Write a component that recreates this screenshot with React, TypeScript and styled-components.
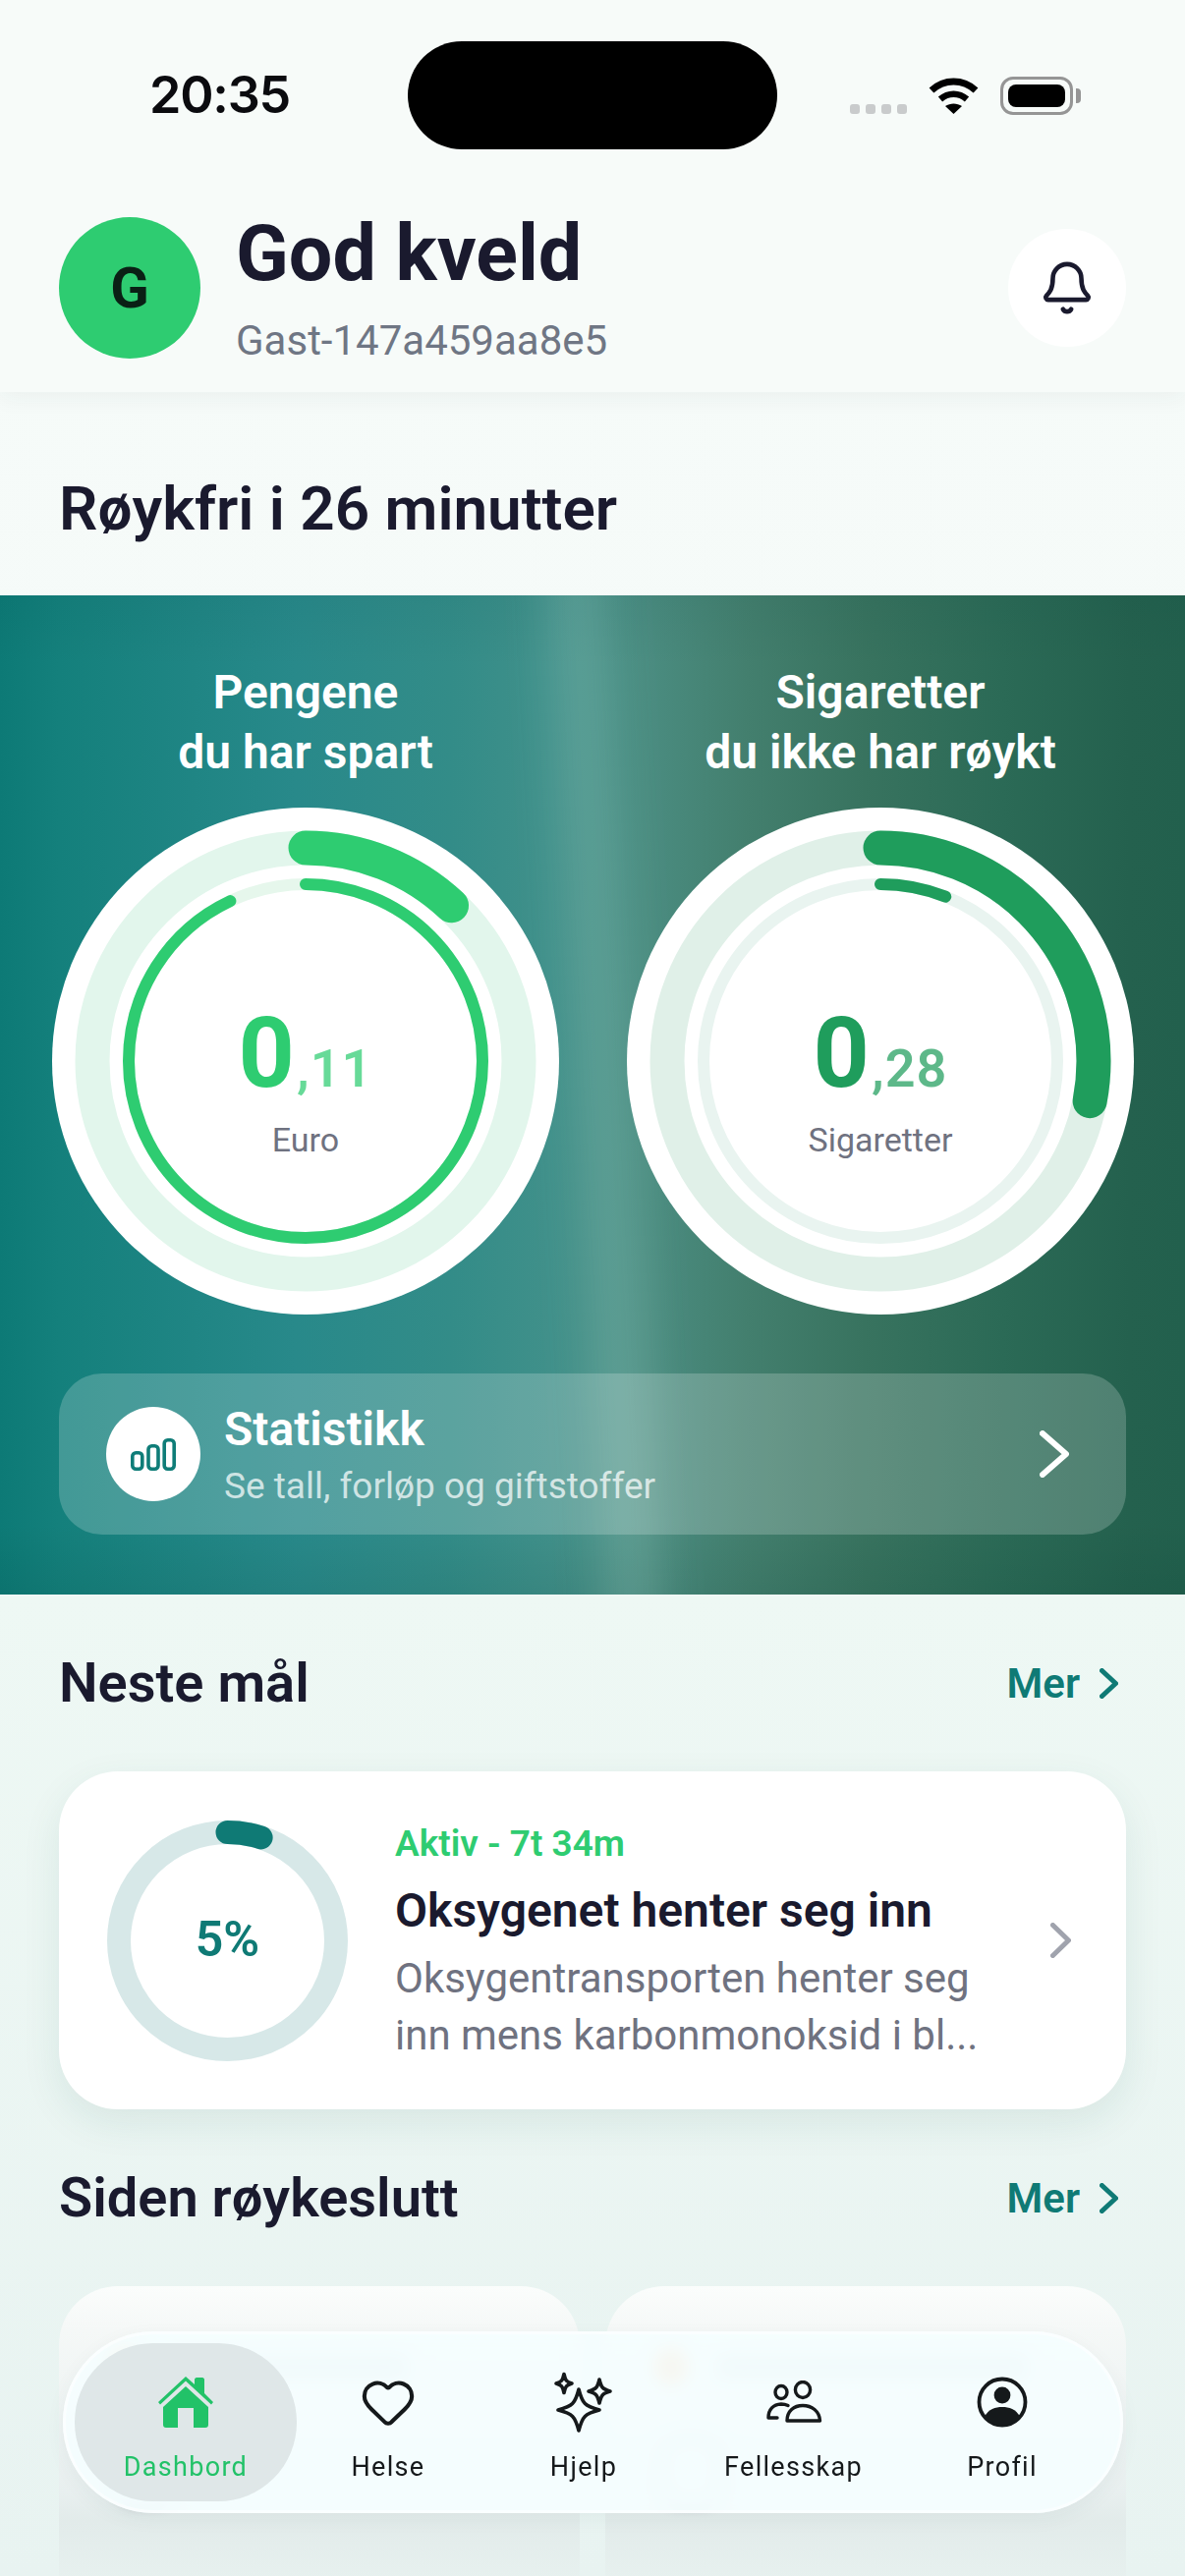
import React from "react";
import styled, { createGlobalStyle } from "styled-components";
import { Bell, Heart } from "lucide-react";

const GlobalStyle = createGlobalStyle`
    html, body {
        margin: 0;
        padding: 0;
        background: #f6fbf9;
    }
    * {
        box-sizing: border-box;
    }
`;

const Screen = styled.div`
    position: relative;
    width: 1206px;
    height: 2622px;
    overflow: hidden;
    font-family: Roboto, "Noto Sans", sans-serif;
    color: #1a1a2e;
    background: linear-gradient(180deg, #f6fbf9 0, #f5faf8 1623px, #eef8f4 1624px, #e8f3f1 2622px);
`;

const TopArea = styled.header`
    height: 399px;
    background: #f7fbf9;
    box-shadow: 0 6px 22px rgba(30, 60, 50, 0.05);
    position: relative;
`;

const StatusBar = styled.div`
    display: grid;
    grid-template-columns: 415px 376px 1fr;
    height: 178px;
    padding-top: 42px;
`;

const Clock = styled.div`
    padding-left: 152px;
    font-family: Inter, sans-serif;
    font-size: 52px;
    line-height: 110px;
    font-weight: 600;
    letter-spacing: -1.2px;
    color: #0b0b0f;
`;

const Island = styled.div`
    height: 110px;
    border-radius: 55px;
    background: #000;
`;

const StatusIcons = styled.div`
    display: flex;
    align-items: center;
    height: 110px;
    padding-left: 74px;
`;

const SignalDots = styled.div`
    display: flex;
    gap: 6px;
    margin: 28px 22px 0 0;
`;

const SignalDot = styled.span`
    width: 10px;
    height: 10px;
    border-radius: 3px;
    background: #c9cbcc;
`;

const Battery = styled.div`
    position: relative;
    width: 74px;
    height: 39px;
    margin-left: 22px;
    padding: 5px;
    border: 3px solid #959595;
    border-radius: 13px;

    &::before {
        content: "";
        display: block;
        height: 100%;
        background: #000;
        border-radius: 8px;
    }

    &::after {
        content: "";
        position: absolute;
        right: -11px;
        top: 9px;
        width: 5px;
        height: 15px;
        background: #959595;
        border-radius: 0 4px 4px 0;
    }
`;

const Greeting = styled.div`
    display: flex;
    align-items: center;
    padding: 36px 60px 0;
`;

const Avatar = styled.div`
    width: 144px;
    height: 144px;
    border-radius: 50%;
    background: #2ecc71;
    display: flex;
    align-items: center;
    justify-content: center;
    font-size: 58px;
    font-weight: 700;
    color: #0a2015;
`;

const GreetingText = styled.div`
    flex: 1;
    margin-left: 36px;
`;

const GreetingTitle = styled.h1`
    margin: 0;
    font-size: 79px;
    line-height: 88px;
    font-weight: 700;
    color: #1a1a2e;
`;

const GreetingName = styled.div`
    margin-top: 20px;
    font-size: 42px;
    line-height: 50px;
    color: #6f7684;
`;

const BellButton = styled.div`
    width: 120px;
    height: 120px;
    border-radius: 50%;
    background: #fff;
    display: flex;
    align-items: center;
    justify-content: center;
    color: #1a1a2e;
`;

const SmokeFree = styled.h2`
    margin: 0;
    height: 207px;
    padding: 85px 60px 0;
    font-size: 62px;
    line-height: 68px;
    font-weight: 600;
    color: #1a1a2e;
`;

const Hero = styled.section`
    position: relative;
    overflow: hidden;
    height: 1017px;
    padding: 68px 60px 0 53px;
    background:
        linear-gradient(180deg, rgba(0, 50, 50, 0.06), transparent 7%, transparent 93%, rgba(0, 50, 40, 0.1)),
        linear-gradient(
            90deg,
            #0d7a76 0,
            #14807c 60px,
            #28898a 300px,
            #338c88 460px,
            #40908a 560px,
            #4a8c80 660px,
            #437f6e 760px,
            #38735f 880px,
            #2b6a56 1020px,
            #24614e 1150px,
            #22604d 1206px
        );

    &::before {
        content: "";
        position: absolute;
        left: 590px;
        top: -60px;
        width: 50px;
        height: 1140px;
        background: rgba(175, 215, 205, 0.26);
        filter: blur(24px);
        transform: rotate(-3deg);
    }
`;

const RingRow = styled.div`
    position: relative;
    display: grid;
    grid-template-columns: 516px 516px;
    column-gap: 69px;
`;

const RingColumn = styled.div`
    display: flex;
    flex-direction: column;
    align-items: center;
`;

const RingTitle = styled.div`
    height: 148px;
    font-size: 48px;
    line-height: 61px;
    font-weight: 600;
    color: #fff;
    text-align: center;
    white-space: nowrap;
`;

const Disc = styled.div`
    display: grid;
    width: 516px;
    height: 516px;
    border-radius: 50%;
    background: #fff;
    place-items: center;

    & > * {
        grid-area: 1 / 1;
    }
`;

const RingValue = styled.div<{ $color: string }>`
    display: flex;
    flex-direction: column;
    align-items: center;
    color: ${(p) => p.$color};
    padding-top: 36px;
`;

const Amount = styled.div`
    display: flex;
    align-items: baseline;
    height: 110px;
    font-size: 100px;
    line-height: 110px;
    font-weight: 700;
`;

const Decimals = styled.span`
    margin-left: 2px;
    font-size: 54px;
    font-weight: 600;
    letter-spacing: 1px;
    opacity: 0.72;
`;

const Unit = styled.div`
    margin-top: 13px;
    font-size: 34px;
    line-height: 40px;
    color: #6f7280;
`;

const StatsCard = styled.div`
    position: relative;
    display: flex;
    align-items: center;
    width: 1086px;
    height: 164px;
    margin: 60px 0 0 7px;
    padding: 0 58px 0 48px;
    border-radius: 44px;
    background: rgba(255, 255, 255, 0.2);
`;

const StatsIcon = styled.div`
    width: 96px;
    height: 96px;
    border-radius: 50%;
    background: #fff;
    display: flex;
    align-items: center;
    justify-content: center;
`;

const StatsText = styled.div`
    flex: 1;
    margin-left: 24px;
`;

const StatsTitle = styled.div`
    font-size: 48px;
    line-height: 58px;
    font-weight: 600;
    color: #fff;
`;

const StatsSub = styled.div`
    margin-top: 7px;
    font-size: 37px;
    line-height: 44px;
    color: rgba(255, 255, 255, 0.72);
`;

const SectionHead = styled.div<{ $height: number }>`
    display: flex;
    justify-content: space-between;
    align-items: center;
    height: ${(p) => p.$height}px;
    padding: 0 68px 0 60px;
`;

const SectionTitle = styled.h3`
    margin: 0;
    font-size: 56px;
    line-height: 66px;
    font-weight: 600;
    color: #1a1a2e;
`;

const MoreLink = styled.div`
    display: flex;
    align-items: center;
    gap: 20px;
    font-size: 42px;
    font-weight: 600;
    color: #0f7a75;
`;

const GoalCard = styled.div`
    display: flex;
    align-items: center;
    height: 344px;
    margin: 0 60px;
    padding: 0 56px 0 49px;
    border-radius: 60px;
    background: #fff;
    box-shadow: 0 14px 40px rgba(20, 90, 80, 0.09);
`;

const GoalRing = styled.div`
    display: grid;
    flex: none;
    width: 245px;
    height: 245px;
    place-items: center;

    & > * {
        grid-area: 1 / 1;
    }
`;

const GoalPercent = styled.div`
    font-size: 50px;
    line-height: 60px;
    margin-bottom: 2px;
    font-weight: 600;
    color: #0f7a75;
`;

const GoalText = styled.div`
    flex: 1;
    margin-left: 48px;
`;

const GoalStatus = styled.div`
    margin-top: 5px;
    font-size: 37px;
    line-height: 46px;
    font-weight: 600;
    color: #2ecc71;
`;

const GoalTitle = styled.div`
    margin-top: 15px;
    font-size: 48px;
    line-height: 60px;
    font-weight: 600;
    color: #1a1a2e;
`;

const GoalDesc = styled.div`
    margin-top: 10px;
    font-size: 42px;
    line-height: 58px;
    color: #6f7280;
`;

const TileRow = styled.div`
    display: grid;
    grid-template-columns: 530px 530px;
    column-gap: 26px;
    padding: 0 60px;
`;

const Tile = styled.div`
    height: 300px;
    padding: 63px 50px 0;
    border-radius: 60px 60px 0 0;
    background: linear-gradient(180deg, #fbfdfc 0, #f5f8f7 15%, #e8efef 70%, #e2ebea 80%, #e7f1ef 100%);
`;

const TileHead = styled.div`
    display: flex;
    align-items: center;
    gap: 30px;
    filter: blur(4px);
`;

const TileDot = styled.div`
    width: 34px;
    height: 38px;
    border-radius: 50%;
    background: #ffb070;
`;

const TileLabel = styled.div<{ $width: number }>`
    width: ${(p) => p.$width}px;
    height: 24px;
    background: #9aa6ae;
    opacity: 0.45;
`;

const TileFigure = styled.div`
    width: 74px;
    height: 80px;
    margin-top: 48px;
    border: 12px solid #9aa6ae;
    border-radius: 30px;
    opacity: 0.3;
    filter: blur(4px);
`;

const NavBar = styled.nav`
    position: absolute;
    left: 64px;
    top: 2373px;
    display: grid;
    grid-template-columns: 226px 186px 212px 215px 210px;
    width: 1079px;
    height: 185px;
    padding: 12px;
    border-radius: 92px;
    background: rgba(245, 254, 255, 0.9);
    backdrop-filter: blur(8px);
    box-shadow:
        inset 0 0 0 3px rgba(255, 255, 255, 0.55),
        0 6px 20px rgba(30, 70, 70, 0.05);
`;

const NavItem = styled.div<{ $active?: boolean }>`
    display: flex;
    flex-direction: column;
    align-items: center;
    height: 161px;
    padding-top: 28px;
    border-radius: 80px;
    background: ${(p) => (p.$active ? "#dfe7e8" : "transparent")};
    color: ${(p) => (p.$active ? "#22c268" : "#15191b")};
`;

const NavIcon = styled.div`
    display: flex;
    align-items: center;
    justify-content: center;
    height: 64px;
`;

const NavLabel = styled.div`
    margin-top: 17px;
    font-size: 27px;
    line-height: 34px;
    font-weight: 400;
    letter-spacing: 1.3px;
`;

const WifiIcon = () => (
    <svg width="51" height="37" viewBox="0 0 51 37">
        <path d="M3 13 C16 1 35 1 48 13" fill="none" stroke="#000" strokeWidth="7" />
        <path d="M12 22 C20 15 31 15 39 22" fill="none" stroke="#000" strokeWidth="6.5" />
        <path d="M25.5 37 L17 29 C22 25.5 29 25.5 34 29 Z" fill="#000" />
    </svg>
);

const BarsIcon = () => (
    <svg width="46" height="33" viewBox="0 0 46 33" fill="none" stroke="#0f7d78" strokeWidth="3.6">
        <rect x="1.8" y="14.8" width="10" height="16.4" rx="3.5" />
        <rect x="18" y="7.8" width="10" height="23.4" rx="3.5" />
        <rect x="34.2" y="1.8" width="10" height="29.4" rx="3.5" />
    </svg>
);

const Chevron: React.FC<{ width: number; height: number; stroke: number; color?: string }> = ({
    width,
    height,
    stroke,
    color = "currentColor",
}) => (
    <svg width={width} height={height} viewBox={`0 0 ${width} ${height}`} fill="none">
        <path
            d={`M${stroke / 2} ${stroke / 2} L${width - stroke / 2} ${height / 2} L${stroke / 2} ${height - stroke / 2}`}
            stroke={color}
            strokeWidth={stroke}
            strokeLinecap="round"
            strokeLinejoin="round"
        />
    </svg>
);

const HomeIcon = () => (
    <svg width="58" height="54" viewBox="0 0 58 54" fill="currentColor">
        <path d="M29 1 L38 9 V4 C38 3 39 2 40 2 H46 C47 2 48 3 48 4 V18 L57 27 L55 29.5 L29 5.5 L3 29.5 L1 27 Z" />
        <path d="M29 11 L52 32 V50 C52 52 51 53 49 53 H37 V33 H21 V53 H9 C7 53 6 52 6 50 V32 Z" />
    </svg>
);

const star = (cx: number, cy: number, w: number, h: number) =>
    `M${cx} ${cy - h} C${cx + w * 0.18} ${cy - h * 0.3} ${cx + w * 0.3} ${cy - h * 0.18} ${cx + w} ${cy}` +
    ` C${cx + w * 0.3} ${cy + h * 0.18} ${cx + w * 0.18} ${cy + h * 0.3} ${cx} ${cy + h}` +
    ` C${cx - w * 0.18} ${cy + h * 0.3} ${cx - w * 0.3} ${cy + h * 0.18} ${cx - w} ${cy}` +
    ` C${cx - w * 0.3} ${cy - h * 0.18} ${cx - w * 0.18} ${cy - h * 0.3} ${cx} ${cy - h} Z`;

const SparklesIcon = () => (
    <svg width="62" height="62" viewBox="0 0 62 62" fill="none" stroke="currentColor" strokeWidth="3.6" strokeLinejoin="round">
        <path d={star(26, 39, 21, 21)} />
        <path d={star(11, 12, 8, 9.5)} />
        <path d={star(47, 20, 11, 12)} />
    </svg>
);

const PeopleIcon = () => (
    <svg width="58" height="44" viewBox="0 0 58 44" fill="none" stroke="currentColor" strokeWidth="3.4" strokeLinecap="round" strokeLinejoin="round">
        <ellipse cx="16" cy="12" rx="6" ry="6.5" />
        <ellipse cx="38" cy="9.5" rx="7.6" ry="8" />
        <path d="M22 41 C22 31 29 25.5 38 25.5 C47 25.5 55 31 55.5 41 Z" />
        <path d="M3 38 C3 29.5 8 24.5 16 24 C19 24 21 24.6 23 25.6 M3 38 H12" />
    </svg>
);

const ProfileIcon = () => (
    <svg width="52" height="52" viewBox="0 0 52 52">
        <circle cx="26" cy="26" r="23.5" fill="none" stroke="currentColor" strokeWidth="3.8" />
        <circle cx="26" cy="19" r="8.4" fill="currentColor" />
        <path d="M8 41 C12 33 19 31 26 31 C33 31 40 33 44 41 C39 46 33 49 26 49 C19 49 13 46 8 41 Z" fill="currentColor" />
    </svg>
);

interface StatRingProps {
    color: string;
    outerTrack: string;
    innerTrack: string;
    outerProgress: number;
    innerProgress: number;
}

const StatRing: React.FC<StatRingProps> = ({ color, outerTrack, innerTrack, outerProgress, innerProgress }) => (
    <svg width="516" height="516" viewBox="0 0 516 516" fill="none">
        <circle cx="258" cy="258" r="217" stroke={outerTrack} strokeWidth="35" />
        <circle cx="258" cy="258" r="180" stroke={innerTrack} strokeWidth="12" />
        <circle
            cx="258"
            cy="258"
            r="217"
            stroke={color}
            strokeWidth="35"
            strokeLinecap="round"
            pathLength={100}
            strokeDasharray={`${outerProgress} 100`}
            transform="rotate(-90 258 258)"
        />
        <circle
            cx="258"
            cy="258"
            r="180"
            stroke={color}
            strokeWidth="12"
            strokeLinecap="round"
            pathLength={100}
            strokeDasharray={`${innerProgress} 100`}
            transform="rotate(-90 258 258)"
        />
    </svg>
);

const stats = [
    {
        title: "Pengene",
        subtitle: "du har spart",
        whole: "0",
        decimals: ",11",
        unit: "Euro",
        color: "#2ecc71",
        outerTrack: "#e2f6ec",
        innerTrack: "#e6f7ec",
        outerProgress: 12,
        innerProgress: 93,
    },
    {
        title: "Sigaretter",
        subtitle: "du ikke har røykt",
        whole: "0",
        decimals: ",28",
        unit: "Sigaretter",
        color: "#1f9d5c",
        outerTrack: "#e0f0e8",
        innerTrack: "#e9f4f0",
        outerProgress: 28,
        innerProgress: 6,
    },
];

const navItems = [
    { label: "Dashbord", icon: <HomeIcon />, active: true },
    { label: "Helse", icon: <Heart size={58} strokeWidth={1.7} /> },
    { label: "Hjelp", icon: <SparklesIcon /> },
    { label: "Fellesskap", icon: <PeopleIcon /> },
    { label: "Profil", icon: <ProfileIcon /> },
];

const App: React.FC = () => (
    <Screen>
        <GlobalStyle />
        <TopArea>
            <StatusBar>
                <Clock>20:35</Clock>
                <Island />
                <StatusIcons>
                    <SignalDots>
                        <SignalDot />
                        <SignalDot />
                        <SignalDot />
                        <SignalDot />
                    </SignalDots>
                    <WifiIcon />
                    <Battery />
                </StatusIcons>
            </StatusBar>
            <Greeting>
                <Avatar>G</Avatar>
                <GreetingText>
                    <GreetingTitle>God kveld</GreetingTitle>
                    <GreetingName>Gast-147a459aa8e5</GreetingName>
                </GreetingText>
                <BellButton>
                    <Bell size={58} strokeWidth={1.9} />
                </BellButton>
            </Greeting>
        </TopArea>

        <SmokeFree>Røykfri i 26 minutter</SmokeFree>

        <Hero>
            <RingRow>
                {stats.map((s) => (
                    <RingColumn key={s.unit}>
                        <RingTitle>
                            {s.title}
                            <br />
                            {s.subtitle}
                        </RingTitle>
                        <Disc>
                            <StatRing
                                color={s.color}
                                outerTrack={s.outerTrack}
                                innerTrack={s.innerTrack}
                                outerProgress={s.outerProgress}
                                innerProgress={s.innerProgress}
                            />
                            <RingValue $color={s.color}>
                                <Amount>
                                    {s.whole}
                                    <Decimals>{s.decimals}</Decimals>
                                </Amount>
                                <Unit>{s.unit}</Unit>
                            </RingValue>
                        </Disc>
                    </RingColumn>
                ))}
            </RingRow>
            <StatsCard>
                <StatsIcon>
                    <BarsIcon />
                </StatsIcon>
                <StatsText>
                    <StatsTitle>Statistikk</StatsTitle>
                    <StatsSub>Se tall, forløp og giftstoffer</StatsSub>
                </StatsText>
                <Chevron width={30} height={48} stroke={6} color="#fff" />
            </StatsCard>
        </Hero>

        <SectionHead $height={180}>
            <SectionTitle>Neste mål</SectionTitle>
            <MoreLink>
                Mer
                <Chevron width={19} height={31} stroke={5} />
            </MoreLink>
        </SectionHead>

        <GoalCard>
            <GoalRing>
                <svg width="245" height="245" viewBox="0 0 245 245" fill="none">
                    <circle cx="122.5" cy="122.5" r="110.5" stroke="#d7e8e8" strokeWidth="24" />
                    <circle
                        cx="122.5"
                        cy="122.5"
                        r="110.5"
                        stroke="#0f7a75"
                        strokeWidth="24"
                        strokeLinecap="round"
                        pathLength={100}
                        strokeDasharray="5 100"
                        transform="rotate(-90 122.5 122.5)"
                    />
                </svg>
                <GoalPercent>5%</GoalPercent>
            </GoalRing>
            <GoalText>
                <GoalStatus>Aktiv - 7t 34m</GoalStatus>
                <GoalTitle>Oksygenet henter seg inn</GoalTitle>
                <GoalDesc>
                    Oksygentransporten henter seg
                    <br />
                    inn mens karbonmonoksid i bl...
                </GoalDesc>
            </GoalText>
            <Chevron width={21} height={36} stroke={5} color="#a0a3ad" />
        </GoalCard>

        <SectionHead $height={180}>
            <SectionTitle>Siden røykeslutt</SectionTitle>
            <MoreLink>
                Mer
                <Chevron width={19} height={31} stroke={5} />
            </MoreLink>
        </SectionHead>

        <TileRow>
            <Tile>
                <TileHead>
                    <TileDot />
                    <TileLabel $width={240} />
                </TileHead>
                <TileFigure />
            </Tile>
            <Tile>
                <TileHead>
                    <TileDot />
                    <TileLabel $width={315} />
                </TileHead>
                <TileFigure />
            </Tile>
        </TileRow>

        <NavBar>
            {navItems.map((item) => (
                <NavItem key={item.label} $active={item.active}>
                    <NavIcon>{item.icon}</NavIcon>
                    <NavLabel>{item.label}</NavLabel>
                </NavItem>
            ))}
        </NavBar>
    </Screen>
);

export default App;
